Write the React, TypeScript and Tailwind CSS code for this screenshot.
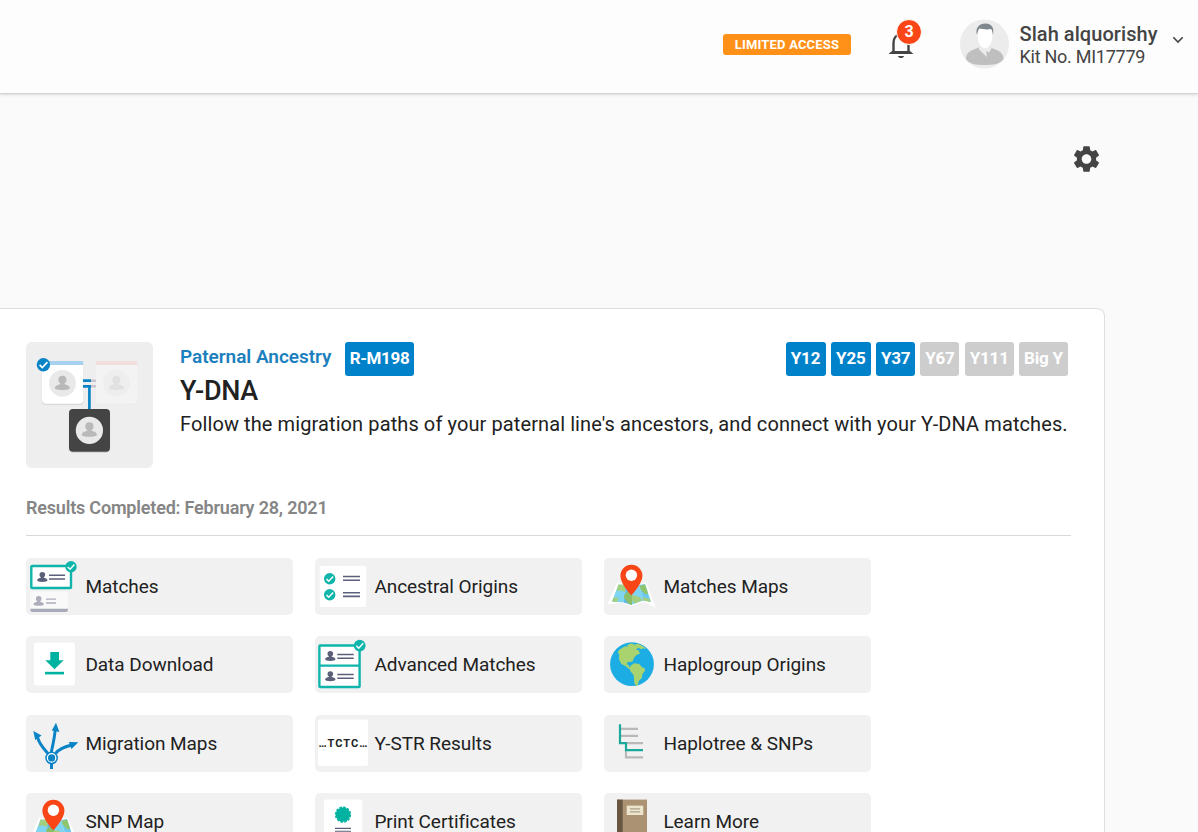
import React from 'react';
import clsx from 'clsx';

interface PersonProps {
  x: number;
  y: number;
  scale?: number;
  color: string;
}

// x, y is the middle of the head
const Person: React.FC<PersonProps> = ({ x, y, scale = 1, color }) => (
  <g transform={`translate(${x} ${y}) scale(${scale})`} fill={color}>
    <circle r="2.8" />
    <path d="M-5.200 5.700c0-1.800 2.500-2.300 3.700-2.700l.4-1.600h2.200l.4 1.600c1.200.4 3.700.900 3.700 2.700 0 1.900-10.400 1.900-10.400 0z" />
  </g>
);

interface CheckProps {
  x: number;
  y: number;
  r: number;
  color: string;
}

const Check: React.FC<CheckProps> = ({ x, y, r, color }) => (
  <g>
    <circle cx={x} cy={y} r={r} fill={color} />
    <path
      transform={`translate(${x} ${y}) scale(${r / 6})`}
      d="M-3.400.200l2.400 2.400 4.600-4.900"
      fill="none"
      stroke="#fff"
      strokeWidth="1.5"
    />
  </g>
);

const MatchesIcon = () => (
  <>
    <rect x="5.300" y="8" width="39.700" height="22" fill="#fff" stroke="#0fb5aa" strokeWidth="2.400" rx=".8" />
    <Person x={16.3} y={16.8} color="#5b5f79" />
    <path d="M23 17.200h16M23 21h16" stroke="#5b5f79" strokeWidth="1.500" />
    <rect x="4.300" y="33.500" width="37.700" height="20.500" rx="2" fill="#f9f9f9" />
    <path d="M4.300 50.800H42v1.200a2 2 0 0 1-2 2H6.300a2 2 0 0 1-2-2z" fill="#a9aab9" />
    <Person x={12.7} y={40.7} color="#adaebb" />
    <path d="M20 41.200h10M20 45h10" stroke="#adaebb" strokeWidth="1.300" />
    <Check x={45} y={8.7} r={5.7} color="#0fb5aa" />
  </>
);

const OriginsIcon = () => (
  <>
    <rect x="4.700" y="8" width="46.600" height="41" rx="1.800" fill="#fff" />
    <Check x={14.7} y={20.7} r={5.7} color="#0fb5aa" />
    <Check x={14.7} y={36.7} r={5.7} color="#0fb5aa" />
    <path d="M28 18.500h17M28 22.200h17M28 34.700h17M28 38.400h17" stroke="#5b5f79" strokeWidth="1.600" />
  </>
);

const MapPinIcon = () => (
  <>
    <path d="M13 24.500l15 3 14-3 10 25-12-5.500-12.500 4L17 45 3.500 46.200z" fill="#fff" />
    <path d="M14.500 26.500l8 .5-3 17.500L8 43.500z" fill="#7fd4ef" />
    <path d="M14.500 26.500l8 .5-1 7-5-1.500-4 .5z" fill="#a3cf7f" />
    <path d="M9.500 39.500l5 .5-1.500 4-5-.5z" fill="#a3cf7f" />
    <path d="M22.500 27l5.500 1v19l-8.500-2.500z" fill="#5fb9e8" />
    <path d="M20.500 36.500l3.500-3 4 4v9.500l-3-1-5-6z" fill="#8cbf68" />
    <path d="M28 28.500l7-1.500 4.500 15.500L28 46.500z" fill="#7fd4ef" />
    <path d="M28 37l5 1 6 4-8 3.500-3-3z" fill="#a3cf7f" />
    <path d="M35 27l6-1 6 18-7.500-1.500z" fill="#6fc9ef" />
    <path d="M35.500 28l5.500-1.500 3.200 9-2.700 1-4.500-4.500z" fill="#8fc66b" />
    <path d="M38.500 39l7 2 1.200 3-7.200-1.500z" fill="#a3cf7f" />
    <path
      d="M27.400 6.700a11 11 0 0 0-11 11c0 8.200 11 19.600 11 19.600s11-11.400 11-19.600a11 11 0 0 0-11-11z"
      fill="#fa4616"
    />
    <circle cx="27.400" cy="17.200" r="5.700" fill="#fff" />
  </>
);

const DownloadIcon = () => (
  <>
    <rect x="8" y="6.600" width="41" height="43" rx="2.500" fill="#fff" />
    <path d="M24.300 16H33v8.300h4.700l-9.200 9-9.200-9h5z" fill="#00b2a0" />
    <path d="M19 37.100h19" stroke="#00b2a0" strokeWidth="2.600" />
  </>
);

const AdvancedIcon = () => (
  <>
    <rect x="4.400" y="9.500" width="40.200" height="41.500" rx=".8" fill="#fff" stroke="#0fb5aa" strokeWidth="2.400" />
    <path d="M4 29.700h41" stroke="#0fb5aa" strokeWidth="2.200" />
    <Person x={15.3} y={17.8} color="#5b5f79" />
    <Person x={15.3} y={38} color="#5b5f79" />
    <path d="M22.300 18.500h16.400M22.300 22.200h16.400M22.300 38.600h16.400M22.300 42.300h16.400" stroke="#5b5f79" strokeWidth="1.500" />
    <Check x={44.7} y={9.6} r={5.9} color="#0fb5aa" />
  </>
);

const GlobeIcon = () => (
  <>
    <circle cx="28" cy="28.200" r="21.900" fill="#1bade4" />
    <path
      d="M16 13.200l5-3 3 .5-1-1.800 5-1.600 2 1.400 4-.9 5 2.500 3.300 2.800-3-.8-2.500 1-2.300-1.600-2.500 1.800 3 1 .8 3.300-3.300 1.200-2.500 2.700-1.500 3.700-3 .5-2.200.3-.3 2.600 2 .3.300 2.200 2.400.8 1.700 2-1.700.3-2.600-1.500-3.700-3-4.300-2.200-2.200-5 .3-4.500-1.600-2z"
      fill="#a9d36e"
    />
    <path
      d="M27 29.300l3.500-2 4.600.8 3 3.200 2.700 1 .1 2.700-2.500 3-.5 4-3 2.700-1.300 4.500-1.200.7-2-2.500-.7-8.200-3.300-4-.7-3.300z"
      fill="#a9d36e"
    />
  </>
);

const MigrationIcon = () => (
  <>
    <g fill="none" stroke="#0a84c6" strokeWidth="3">
      <path d="M25.500 54V44" />
      <path d="M25 38.500C26.500 31 28.500 24 29.300 14" />
      <path d="M22 38.500C18 34 13 29 11.500 22" />
      <path d="M29.500 38.500C33 34 39 31.500 46 30" />
    </g>
    <path d="M30 7.700l3.400 9.200-7.600-1.400zM7.300 16l8.300 4.600-6.400 4.400zM52.300 27.300l-9.500-.4 2.700 7z" fill="#0a84c6" />
    <circle cx="25.600" cy="42.900" r="5.600" fill="#fff" stroke="#0a84c6" strokeWidth="1.500" />
    <circle cx="25.600" cy="42.900" r="3.600" fill="#0a84c6" />
  </>
);

const StrIcon = () => (
  <>
    <rect x="3" y="4.600" width="50" height="46.500" rx="2.500" fill="#fff" />
    <text
      x="27.900"
      y="32.300"
      textAnchor="middle"
      textLength="49"
      className="font-bold text-[11px]"
      fill="#222"
    >
      …TCTC…
    </text>
  </>
);

const HaplotreeIcon = () => (
  <g fill="none" strokeWidth="2.200">
    <path d="M17 13.900h17M17 20.900h17M23 28.200h16M22 35v7.300h17" stroke="#b9b9b9" />
    <path d="M16 9.200v19h6v7h17" stroke="#1aa99b" />
  </g>
);

const CertificateIcon = () => (
  <>
    <rect x="9" y="6.600" width="38.300" height="46" rx="1.500" fill="#fff" />
    <circle cx="28" cy="21.600" r="7.200" fill="#00b2a0" />
    <circle cx="28" cy="21.600" r="7.400" fill="none" stroke="#00b2a0" strokeWidth="1.500" strokeDasharray="2.600 1.270" />
    <path d="M20 35.400h16M20 38.300h16" stroke="#5b5f79" strokeWidth="1.100" />
  </>
);

const BookIcon = () => (
  <>
    <rect x="13" y="6.600" width="30" height="46" fill="#ab9273" />
    <rect x="13" y="6.600" width="5.700" height="46" fill="#685641" />
    <rect x="22.700" y="12.600" width="16.600" height="9.400" fill="#ece4cc" />
    <path d="M26 15.900h10M26 18.900h10" stroke="#aaa18a" strokeWidth="1.100" />
  </>
);

const tools = [
  { label: 'Matches', Icon: MatchesIcon },
  { label: 'Ancestral Origins', Icon: OriginsIcon },
  { label: 'Matches Maps', Icon: MapPinIcon },
  { label: 'Data Download', Icon: DownloadIcon },
  { label: 'Advanced Matches', Icon: AdvancedIcon },
  { label: 'Haplogroup Origins', Icon: GlobeIcon },
  { label: 'Migration Maps', Icon: MigrationIcon },
  { label: 'Y-STR Results', Icon: StrIcon },
  { label: 'Haplotree & SNPs', Icon: HaplotreeIcon },
  { label: 'SNP Map', Icon: MapPinIcon },
  { label: 'Print Certificates', Icon: CertificateIcon },
  { label: 'Learn More', Icon: BookIcon },
];

const levels = [
  { label: 'Y12', active: true, width: 'w-10' },
  { label: 'Y25', active: true, width: 'w-10' },
  { label: 'Y37', active: true, width: 'w-[39px]' },
  { label: 'Y67', active: false, width: 'w-[39px]' },
  { label: 'Y111', active: false, width: 'w-[49px]' },
  { label: 'Big Y', active: false, width: 'w-[49px]' },
];

const Header = () => (
  <header className="h-[94px] shrink-0 bg-[#fdfdfd] border-b border-[#d3d3d3] shadow-[0_1px_3px_rgba(0,0,0,0.13)] flex items-start justify-end">
    <div className="mt-[34px] w-32 h-[21px] rounded-[3px] bg-[#ff9118] text-white text-[13px] font-bold tracking-[0.18px] flex items-center justify-center">
      LIMITED ACCESS
    </div>
    <div className="relative ml-[37px] mt-[29px] w-[26px] h-[30px]">
      <svg viewBox="0 0 26 30" className="w-[26px] h-[30px]">
        <path
          d="M5.500 24V14c0-5 3-8.500 7.500-8.500s7.500 3.500 7.500 8.500v10"
          fill="none"
          stroke="#444"
          strokeWidth="2.400"
        />
        <path d="M0.500 25l3.500-3h18l3.500 3z M10 27h6c-.5 2.800-5.500 2.800-6 0z" fill="#444" />
      </svg>
      <div className="absolute left-2 -top-[10px] w-[26px] h-[26px] rounded-full bg-[#fa4616] border border-[#fdfdfd] text-white font-bold text-base leading-none flex items-center justify-center">
        3
      </div>
    </div>
    <svg viewBox="0 0 50 50" className="ml-[46px] mt-[19px] w-[50px] h-[50px]">
      <circle cx="24.500" cy="25" r="24.500" fill="#ececec" />
      <path d="M6 40c0-7 5-8.500 13-11.500h11c8 3 13.500 4.500 13.500 11.500-3 5-10 6-19 6S9 45 6 40z" fill="#bfbfbf" />
      <path d="M18.500 29.500l1.500-1.500h10l1.500 1.500-2.500 4-3-1.500 1 6-6-5.500z" fill="#ececec" />
      <path d="M17.500 14c0-6 3-8 7.500-8s7.500 2 7.500 8c0 8-2 15-7.500 15s-7.500-7-7.500-15z" fill="#fff" />
      <path d="M17 16c-2-7 2-11.500 8.500-11.500 6 0 9 4 7.500 11.500-.5-3-1-5-2-6-4 1-9 0-11.500-.5-1.500 1.500-2 4-2.500 6.500z" fill="#7f888d" />
    </svg>
    <div className="ml-[9.500px] mt-[22px] w-[152px] text-[#444] whitespace-nowrap">
      <div className="text-[20px] leading-6 font-medium tracking-[0.060px]">Slah alquorishy</div>
      <div className="text-[18px] leading-[22px] tracking-[-0.260px]">Kit No. MI17779</div>
    </div>
    <svg viewBox="0 0 12 8" className="mt-9 mr-[14.500px] w-3 h-2">
      <path d="M1.300 1.300L6 6l4.700-4.700" fill="none" stroke="#444" strokeWidth="1.600" />
    </svg>
  </header>
);

const AncestryThumb = () => (
  <svg viewBox="0 0 127 126" className="w-[127px] h-[126px] shrink-0 rounded-md bg-[#eee]">
    <rect x="15.800" y="21" width="41.700" height="42" rx="4" fill="#d8d8d8" />
    <path d="M16 19h41.300v38.700a4 4 0 0 1-4 4H20a4 4 0 0 1-4-4z" fill="#fff" />
    <path d="M16 19h41.300v4H16z" fill="#a8d1ee" />
    <circle cx="36.500" cy="41.300" r="13.400" fill="#e9e9e9" />
    <Person x={36.4} y={37.8} scale={1.45} color="#b9b9b9" />
    <rect x="70" y="20" width="41.300" height="42.500" rx="4" fill="#e9e9e9" />
    <path d="M70 19h41.300v38.700a4 4 0 0 1-4 4H74a4 4 0 0 1-4-4z" fill="#f3f3f3" />
    <path d="M70 19h41.300v4H70z" fill="#f3dede" />
    <circle cx="90.500" cy="41.300" r="13.400" fill="#eeeeee" />
    <Person x={90.4} y={37.8} scale={1.45} color="#e1e1e1" />
    <path d="M65 38.700h5M65 44.300h5" stroke="#c9c3d0" strokeWidth="2.600" />
    <path d="M57 38.700h8M57 44.300h8M63.400 44v24" stroke="#0a84c6" strokeWidth="2.700" />
    <rect x="42.800" y="68" width="41.400" height="43" rx="4.500" fill="#d8d8d8" />
    <rect x="43" y="67" width="41" height="42.700" rx="4" fill="#444" />
    <circle cx="63.400" cy="88.400" r="13.600" fill="#e9e9e9" />
    <Person x={63.4} y={84.4} scale={1.45} color="#b9b9b9" />
    <Check x={17.4} y={22.7} r={6.7} color="#0a84c6" />
  </svg>
);

const App: React.FC = () => {
  return (
    <div className="h-screen overflow-hidden flex flex-col bg-[#fafafa] font-['Roboto',sans-serif] text-[#212121]">
      <Header />

      {/* Settings */}
      <div className="h-[214px] shrink-0 pt-[49px] pr-[95px] flex justify-end">
        <svg viewBox="0 0 24 24" className="w-[33px] h-8" fill="#444">
          <path d="M19.140 12.940c.040-.300.060-.610.060-.940 0-.320-.020-.640-.070-.940l2.030-1.580c.180-.140.230-.410.120-.610l-1.920-3.320c-.120-.220-.370-.290-.590-.220l-2.390.960c-.500-.380-1.030-.700-1.620-.940l-.360-2.540c-.040-.240-.240-.410-.480-.410h-3.840c-.240 0-.430.170-.470.410l-.360 2.540c-.590.240-1.130.570-1.620.940l-2.390-.960c-.220-.080-.470 0-.590.220L2.740 8.870c-.120.210-.080.470.120.610l2.030 1.580c-.050.300-.090.630-.090.940s.020.640.070.940l-2.030 1.580c-.180.140-.230.410-.120.610l1.920 3.320c.120.220.370.290.590.220l2.390-.960c.500.380 1.030.700 1.620.940l.360 2.540c.050.240.240.410.480.410h3.840c.240 0 .440-.170.470-.410l.360-2.540c.590-.240 1.130-.560 1.620-.940l2.390.960c.220.080.470 0 .590-.220l1.920-3.320c.120-.220.070-.470-.120-.610l-2.010-1.580zM12 15.600c-1.980 0-3.600-1.620-3.600-3.600s1.620-3.600 3.600-3.600 3.600 1.620 3.600 3.600-1.620 3.600-3.600 3.600z" />
        </svg>
      </div>

      <main className="w-[1105px] h-[600px] shrink-0 bg-white border border-l-0 border-[#dedede] rounded-tr-lg pt-[33px] pl-[26px]">
        <div className="flex">
          <AncestryThumb />
          <div className="ml-[27px] w-[888px]">
            <div className="flex">
              <h2 className="w-[165px] pt-[3px] text-[19px] leading-6 font-semibold tracking-[-0.030px] text-[#1c7fbe] whitespace-nowrap">
                Paternal Ancestry
              </h2>
              <div className="w-[69px] h-[34px] rounded-[3px] bg-[#0082cb] text-white text-[17px] font-bold tracking-[-0.350px] flex items-center justify-center">
                R-M198
              </div>
              <div className="ml-auto flex gap-[5.300px]">
                {levels.map((level) => (
                  <div
                    key={level.label}
                    className={clsx(
                      'h-[34px] rounded-[3px] text-white text-[17px] font-bold tracking-[-0.200px] flex items-center justify-center whitespace-nowrap',
                      level.width,
                      level.active ? 'bg-[#0082cb]' : 'bg-[#cdcdcd]'
                    )}
                  >
                    {level.label}
                  </div>
                ))}
              </div>
            </div>
            <h1 className="text-[27px] leading-[30px] font-medium tracking-[-0.300px]">Y-DNA</h1>
            <p className="mt-[6px] text-[20px] leading-6 tracking-[0.100px] whitespace-nowrap">
              Follow the migration paths of your paternal line's ancestors, and connect with your Y-DNA matches.
            </p>
          </div>
        </div>

        <div className="mt-7 w-[1045px] h-10 border-b border-[#d9d9d9] text-[18px] leading-6 font-semibold tracking-[-0.190px] text-[#858585]">
          Results Completed: February 28, 2021
        </div>

        {/* Tools */}
        <div className="mt-[22px] grid grid-cols-[repeat(3,267px)] gap-x-[22px] gap-y-[21.400px]">
          {tools.map(({ label, Icon }) => (
            <div key={label} className="h-[57px] rounded-[5px] bg-[#f1f1f1] flex items-center text-[19px] tracking-[-0.050px] whitespace-nowrap">
              <svg viewBox="0 0 59 57" className="w-[59px] h-[57px] shrink-0">
                <Icon />
              </svg>
              <span className="pl-[0.400px] pt-px">{label}</span>
            </div>
          ))}
        </div>
      </main>
    </div>
  );
};

export default App;
